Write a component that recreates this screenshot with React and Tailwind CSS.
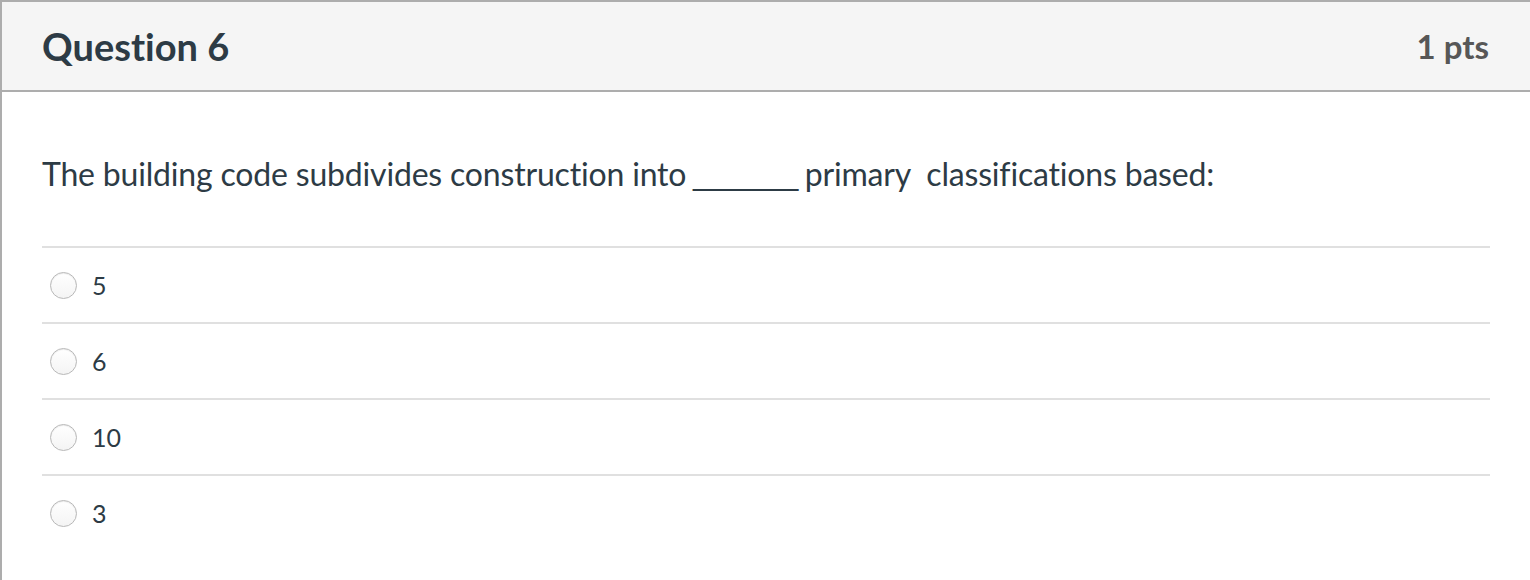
export default function App() {
  const options = ["5", "6", "10", "3"];
  return (
    <div className="w-[1530px] h-[580px] bg-white overflow-hidden" style={{ fontFamily: "Lato, 'Noto Sans', sans-serif" }}>
      <div className="border-l-2 border-t-2 border-[#adadad] h-full">
        <div className="h-[90px] bg-[#f5f5f5] border-b-2 border-[#adadad] flex items-center justify-between pl-[40px] pr-[41px]">
          <div className="text-[38px] font-bold text-[#2d3b45] leading-none [font-variant-ligatures:none] [font-feature-settings:'liga'_0,'dlig'_0]">Question 6</div>
          <div className="text-[33px] font-bold text-[#575757] leading-none">1 pts</div>
        </div>
        <div className="px-[40px]">
          <div className="pt-[62px] pb-[52px] text-[32px] tracking-[-0.18px] text-[#2d3b45] leading-[40px]">
            The building code subdivides <span className="[font-variant-ligatures:none]">construction into</span><span className="tracking-[-3px]"> _________</span> primary&nbsp; classifi<span className="[font-variant-ligatures:none]">cations</span> based:
          </div>
          {options.map((o) => (
            <div key={o} className="border-t-2 border-[#e0e0e0] h-[76px] flex items-center pl-[8px]">
              <div className="w-[27px] h-[27px] rounded-full border border-[#b8b8b8] bg-gradient-to-b from-white to-[#f4f4f4] shadow-[inset_0_1px_1px_rgba(0,0,0,0.08)]" />
              <div className="ml-[15px] text-[25px] text-[#2d3b45] leading-none">{o}</div>
            </div>
          ))}
        </div>
      </div>
    </div>
  );
}
